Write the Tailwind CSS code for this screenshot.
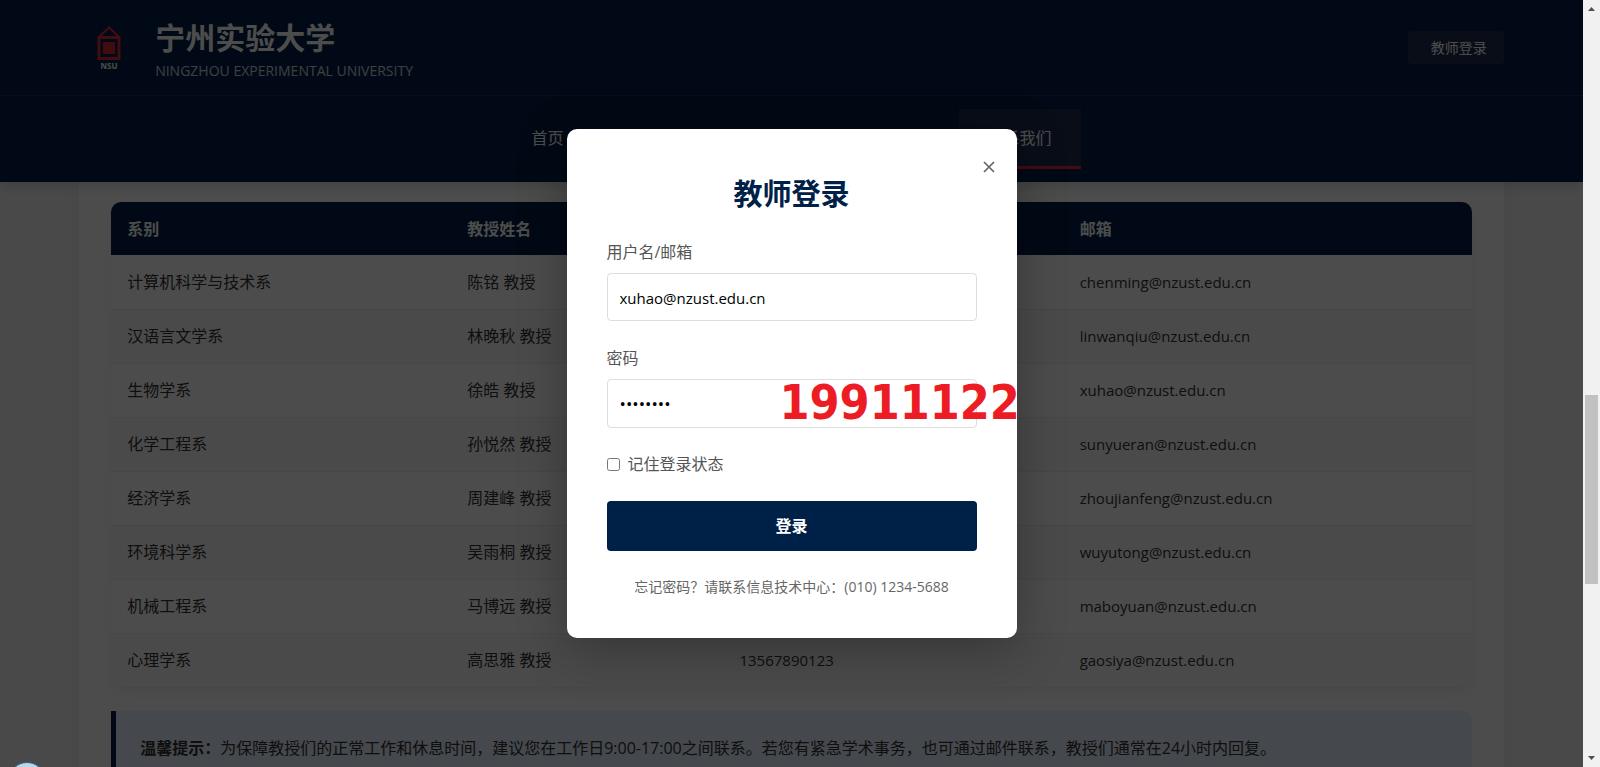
<!DOCTYPE html>
<html lang="zh-CN">
<head>
    <meta charset="UTF-8">
    <meta name="viewport" content="width=device-width, initial-scale=1.0">
    <title>宁州实验大学 - 联系我们</title>
    <script src="https://cdn.jsdelivr.net/npm/@tailwindcss/browser@4"></script>
</head>
<body class="flex h-screen overflow-hidden bg-[#f5f5f5] text-base leading-[26px] text-[#333] font-['Open_Sans','Noto_Sans_CJK_SC',sans-serif]">
    <div class="relative flex-1 min-w-0 overflow-hidden">
        <header class="relative z-10 bg-[#002147] text-white shadow-[0_4px_12px_rgba(0,0,0,0.15)]">
            <div class="border-b border-white/10">
                <div class="w-[90%] mx-auto h-[95px] flex items-center justify-between">
                    <div class="flex items-center gap-4">
                        <svg class="w-15 h-15" viewBox="0 0 60 60" aria-hidden="true">
                            <path d="M20 19 30 9.500 40 19" fill="none" stroke="#e02b37" stroke-width="2"/>
                            <rect x="20" y="19.500" width="20" height="21" fill="none" stroke="#e02b37" stroke-width="3"/>
                            <rect x="24" y="24" width="12" height="12" fill="#e02b37"/>
                            <path d="M26 26h1v1h-1zM33 26h1v1h-1zM26 33h1v1h-1zM33 33h1v1h-1zM29.500 26h1v1h-1zM29.500 33h1v1h-1z" fill="#002147" opacity=".5"/>
                            <text x="30" y="51" text-anchor="middle" font-size="8" font-weight="700" fill="#fff">NSU</text>
                        </svg>
                        <div class="pt-1">
                            <h1 class="text-3xl leading-[42px] font-bold">宁州实验大学</h1>
                            <p class="text-sm leading-6 text-white/80">NINGZHOU EXPERIMENTAL UNIVERSITY</p>
                        </div>
                    </div>
                    <button type="button" class="w-24 h-[33px] pl-[22px] pr-4 rounded bg-[#1b2d52] text-sm whitespace-nowrap">教师登录</button>
                </div>
            </div>
            <nav class="flex justify-center py-[13px]">
                <a href="#" class="h-[60px] px-[29px] pt-4 border-b-3 border-transparent">首页</a>
                <a href="#" class="h-[60px] px-[29px] pt-4 border-b-3 border-transparent">学校概况</a>
                <a href="#" class="h-[60px] px-[29px] pt-4 border-b-3 border-transparent">院系设置</a>
                <a href="#" class="h-[60px] px-[29px] pt-4 border-b-3 border-transparent">新闻动态</a>
                <a href="#" class="h-[60px] px-[29px] pt-4 border-b-3 border-[#e02b37] bg-[#1b2d52]">联系我们</a>
            </nav>
        </header>

        <main class="w-[90%] mx-auto bg-white px-8 pt-5 pb-8 shadow-[0_0_20px_rgba(0,0,0,0.05)]">
            <div class="rounded-[10px] overflow-hidden shadow-[0_5px_15px_rgba(0,0,0,0.05)]">
                <table class="w-full table-fixed text-left">
                    <thead class="bg-[#002147] text-white">
                        <tr class="h-[53px]">
                            <th class="w-[25%] px-4 font-bold">系别</th>
                            <th class="w-[20%] px-4 font-bold">教授姓名</th>
                            <th class="w-[25%] px-4 font-bold">联系电话</th>
                            <th class="w-[30%] px-4 font-bold">邮箱</th>
                        </tr>
                    </thead>
                    <tbody>
                        <tr class="h-[54px] border-b border-[#eee]">
                            <td class="px-4">计算机科学与技术系</td>
                            <td class="px-4">陈铭 教授</td>
                            <td class="px-4 text-[15px]"></td>
                            <td class="px-4 text-[15px]">chenming@nzust.edu.cn</td>
                        </tr>
                        <tr class="h-[54px] border-b border-[#eee] bg-[#f9f9f9]">
                            <td class="px-4">汉语言文学系</td>
                            <td class="px-4">林晚秋 教授</td>
                            <td class="px-4 text-[15px]"></td>
                            <td class="px-4 text-[15px]">linwanqiu@nzust.edu.cn</td>
                        </tr>
                        <tr class="h-[54px] border-b border-[#eee]">
                            <td class="px-4">生物学系</td>
                            <td class="px-4">徐皓 教授</td>
                            <td class="px-4 text-[15px]"></td>
                            <td class="px-4 text-[15px]">xuhao@nzust.edu.cn</td>
                        </tr>
                        <tr class="h-[54px] border-b border-[#eee] bg-[#f9f9f9]">
                            <td class="px-4">化学工程系</td>
                            <td class="px-4">孙悦然 教授</td>
                            <td class="px-4 text-[15px]"></td>
                            <td class="px-4 text-[15px]">sunyueran@nzust.edu.cn</td>
                        </tr>
                        <tr class="h-[54px] border-b border-[#eee]">
                            <td class="px-4">经济学系</td>
                            <td class="px-4">周建峰 教授</td>
                            <td class="px-4 text-[15px]"></td>
                            <td class="px-4 text-[15px]">zhoujianfeng@nzust.edu.cn</td>
                        </tr>
                        <tr class="h-[54px] border-b border-[#eee] bg-[#f9f9f9]">
                            <td class="px-4">环境科学系</td>
                            <td class="px-4">吴雨桐 教授</td>
                            <td class="px-4 text-[15px]"></td>
                            <td class="px-4 text-[15px]">wuyutong@nzust.edu.cn</td>
                        </tr>
                        <tr class="h-[54px] border-b border-[#eee]">
                            <td class="px-4">机械工程系</td>
                            <td class="px-4">马博远 教授</td>
                            <td class="px-4 text-[15px]"></td>
                            <td class="px-4 text-[15px]">maboyuan@nzust.edu.cn</td>
                        </tr>
                        <tr class="h-[54px] border-b border-[#eee] bg-[#f9f9f9]">
                            <td class="px-4">心理学系</td>
                            <td class="px-4">高思雅 教授</td>
                            <td class="px-4 text-[15px]">13567890123</td>
                            <td class="px-4 text-[15px]">gaosiya@nzust.edu.cn</td>
                        </tr>
                    </tbody>
                </table>
            </div>
            <p class="mt-[23px] p-6 border-l-5 border-[#002147] rounded-r-lg bg-[#e6f0ff]"><strong>温馨提示：</strong>为保障教授们的正常工作和休息时间，建议您在工作日9:00-17:00之间联系。若您有紧急学术事务，也可通过邮件联系，教授们通常在24小时内回复。</p>
        </main>

        <!-- Login modal -->
        <div class="absolute inset-0 z-20 flex items-center justify-center bg-black/70">
            <form class="relative w-[450px] p-10 rounded-[10px] bg-white text-[#555] shadow-[0_10px_50px_rgba(0,0,0,0.3)]">
                <button type="button" aria-label="关闭" class="absolute top-6 right-5 w-4 h-7 text-[#666] flex items-center justify-center">
                    <svg class="w-3 h-3" viewBox="0 0 12 12" fill="none" stroke="currentColor" stroke-width="1.700"><path d="M1 1l10 10M11 1 1 11"/></svg>
                </button>
                <h2 class="mb-5 text-[29px] leading-[50px] font-bold text-center text-[#002147]">教师登录</h2>
                <label for="username" class="block mb-2">用户名/邮箱</label>
                <input id="username" type="text" value="xuhao@nzust.edu.cn" class="block w-full h-12 px-3 pt-0.5 border border-[#ddd] rounded text-[15px] text-black">
                <label for="password" class="block mt-6 mb-2">密码</label>
                <div class="relative">
                    <input id="password" type="password" value="19911122" class="block w-full h-[49px] px-3 border border-[#ddd] rounded text-[17px] text-black">
                    <span class="absolute left-[173px] top-0 text-[48px] leading-[46px] font-bold text-[#ed1c24] font-['DejaVu_Sans_Condensed','DejaVu_Sans',sans-serif]">19911122</span>
                </div>
                <div class="flex items-center gap-2 mt-6 leading-[25px]">
                    <input id="remember" type="checkbox" class="w-[13px] h-[13px]">
                    <label for="remember">记住登录状态</label>
                </div>
                <button type="submit" class="block w-full h-[50px] mt-6 rounded bg-[#002147] text-white font-bold">登录</button>
                <p class="mt-6 text-sm leading-[23px] text-center text-[#666]">忘记密码？请联系信息技术中心：(010) 1234-5688</p>
            </form>
        </div>

        <!-- Floating ball at the lower edge -->
        <div class="absolute z-30 left-[9px] -bottom-[31px] w-9 h-9 rounded-full border border-[#2a6b9c] bg-linear-to-b from-[#b9d3e6] to-[#e8f2f9]"></div>
    </div>

    <!-- Scrollbar -->
    <div class="w-[17px] shrink-0 flex flex-col items-center bg-[#f1f1f1]" aria-hidden="true">
        <svg class="w-[17px] h-[17px]" viewBox="0 0 17 17" fill="#505050"><path d="M5 11h7L8.500 7z"/></svg>
        <div class="flex-1 w-[13px] flex flex-col">
            <div class="flex-[378]"></div>
            <div class="flex-[189] bg-[#c1c1c1]"></div>
            <div class="flex-[166]"></div>
        </div>
        <svg class="w-[17px] h-[17px]" viewBox="0 0 17 17" fill="#505050"><path d="M5 6h7L8.500 10z"/></svg>
    </div>
</body>
</html>
